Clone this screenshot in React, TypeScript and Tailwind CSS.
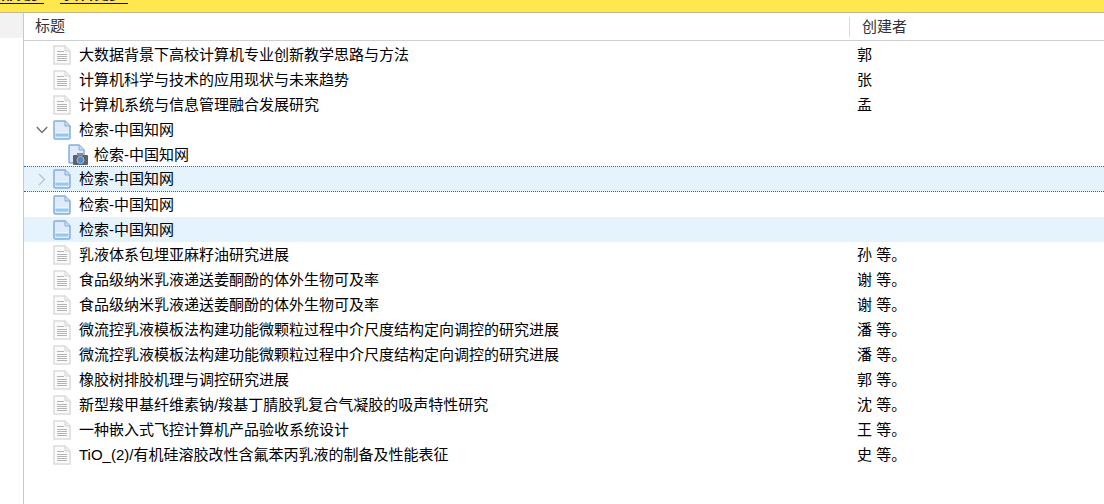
const font = "font-['Liberation_Sans','Noto_Sans_CJK_SC',sans-serif]";

type Row = {
  title: string;
  author?: string;
  icon: "doc" | "blue" | "snap";
  chevron?: "down" | "right";
  child?: boolean;
  selected?: boolean;
  focused?: boolean;
};

const rows: Row[] = [
  { title: "大数据背景下高校计算机专业创新教学思路与方法", author: "郭", icon: "doc" },
  { title: "计算机科学与技术的应用现状与未来趋势", author: "张", icon: "doc" },
  { title: "计算机系统与信息管理融合发展研究", author: "孟", icon: "doc" },
  { title: "检索-中国知网", icon: "blue", chevron: "down" },
  { title: "检索-中国知网", icon: "snap", child: true },
  { title: "检索-中国知网", icon: "blue", chevron: "right", focused: true },
  { title: "检索-中国知网", icon: "blue" },
  { title: "检索-中国知网", icon: "blue", selected: true },
  { title: "乳液体系包埋亚麻籽油研究进展", author: "孙 等。", icon: "doc" },
  { title: "食品级纳米乳液递送姜酮酚的体外生物可及率", author: "谢 等。", icon: "doc" },
  { title: "食品级纳米乳液递送姜酮酚的体外生物可及率", author: "谢 等。", icon: "doc" },
  { title: "微流控乳液模板法构建功能微颗粒过程中介尺度结构定向调控的研究进展", author: "潘 等。", icon: "doc" },
  { title: "微流控乳液模板法构建功能微颗粒过程中介尺度结构定向调控的研究进展", author: "潘 等。", icon: "doc" },
  { title: "橡胶树排胶机理与调控研究进展", author: "郭 等。", icon: "doc" },
  { title: "新型羧甲基纤维素钠/羧基丁腈胶乳复合气凝胶的吸声特性研究", author: "沈 等。", icon: "doc" },
  { title: "一种嵌入式飞控计算机产品验收系统设计", author: "王 等。", icon: "doc" },
  { title: "TiO_(2)/有机硅溶胶改性含氟苯丙乳液的制备及性能表征", author: "史 等。", icon: "doc" },
];

function DocIcon() {
  return (
    <svg width="18" height="20" viewBox="0 0 18 20" className="shrink-0">
      <path d="M1 1H12L17 6V19H1Z" fill="#fbfbfb" stroke="#dcdcdc" strokeWidth="1.6" />
      <path d="M12 1V6H17" fill="#ececec" stroke="#d4d4d4" />
      <path d="M4 6.5H11M4 9.5H14M4 11.5H14M4 13.5H14M4 15.5H14" stroke="#b4b4b4" />
    </svg>
  );
}

function BlueIcon() {
  return (
    <svg width="18" height="20" viewBox="0 0 18 20" className="shrink-0">
      <path d="M2 1H12L17 6V17.5A1.5 1.5 0 0 1 15.5 19H2.5A1.5 1.5 0 0 1 1 17.5V2A1 1 0 0 1 2 1Z" fill="#dfeafa" stroke="#80aedd" strokeWidth="1.5" />
      <path d="M12 1V6H17" fill="#c6dcf3" stroke="#80aedd" />
      <rect x="2.5" y="12.5" width="13" height="1" fill="#ffffff" />
      <rect x="2.5" y="13.5" width="13" height="3" fill="#8fcaf2" />
    </svg>
  );
}

function SnapIcon() {
  return (
    <svg width="20" height="21" viewBox="0 0 20 21" className="shrink-0">
      <path d="M2 1H11L16 6V19H2A1 1 0 0 1 1 18V2A1 1 0 0 1 2 1Z" fill="#dfeafa" stroke="#80aedd" strokeWidth="1.5" />
      <path d="M11 1V6H16" fill="#c6dcf3" stroke="#80aedd" />
      <rect x="5" y="11" width="15" height="10" rx="1" fill="#5f6266" />
      <rect x="9" y="9" width="6" height="3" fill="#85888c" />
      <circle cx="12.5" cy="16" r="3.5" fill="#4a8ed0" stroke="#a9b8c6" />
    </svg>
  );
}

function Chevron({ dir }: { dir: "down" | "right" }) {
  return dir === "down" ? (
    <svg width="12" height="8" viewBox="0 0 12 8">
      <path d="M0.8 1L6 6.5L11.2 1" fill="none" stroke="#6f6f6f" strokeWidth="1.4" />
    </svg>
  ) : (
    <svg width="8" height="13" viewBox="0 0 8 13">
      <path d="M1 1L6.5 6.5L1 12" fill="none" stroke="#c2c2c2" strokeWidth="1.4" />
    </svg>
  );
}

function ListRow({ row }: { row: Row }) {
  const box = row.focused
    ? "h-[26px] -mt-px bg-[#e5f3fd] border-y border-dotted border-[#0078d7]"
    : row.selected
      ? "h-[25px] bg-[#e5f3fd]"
      : "h-[25px]";
  // text sits a pixel low in every row but the focused one
  const nudge = row.focused ? "" : "pt-[2px]";
  return (
    <div className={`flex items-center ${box}`}>
      <div className="flex items-center w-[825px] shrink-0 overflow-hidden">
        <div className="w-[29px] shrink-0 pl-[6px] flex justify-center">
          {row.chevron && <Chevron dir={row.chevron} />}
        </div>
        {row.child && <div className="w-[15px] shrink-0" />}
        {row.icon === "doc" && <DocIcon />}
        {row.icon === "blue" && <BlueIcon />}
        {row.icon === "snap" && <SnapIcon />}
        <span className={`${row.child ? "ml-[6px]" : "ml-[8px]"} ${nudge} text-[15px] text-black whitespace-nowrap`}>
          {row.title}
        </span>
      </div>
      <span className={`ml-[8px] ${nudge} text-[15px] text-black whitespace-nowrap`}>{row.author}</span>
    </div>
  );
}

export default function App() {
  return (
    <div className={`w-[1104px] h-[504px] flex flex-col overflow-hidden bg-white ${font}`}>
      {/* yellow banner, its links are cut off by the crop */}
      <div className="h-[13px] shrink-0 bg-[#ffe74d] border-b border-[#b5b5b5] flex items-end overflow-hidden">
        <a className="ml-[-14px] mb-[8px] w-[58px] text-right text-[15px] leading-[18px] font-bold text-black border-b border-black whitespace-nowrap overflow-hidden">
          全部更多
        </a>
        <a className="ml-[16px] mb-[8px] w-[68px] text-center text-[15px] leading-[18px] font-bold text-black border-b border-black whitespace-nowrap overflow-hidden">
          资料更多
        </a>
      </div>
      <div className="flex flex-1 min-h-0">
        {/* left rail */}
        <div className="w-[24px] shrink-0 border-r border-[#c9c9c9] flex flex-col">
          <div className="h-[25px] bg-[#f2f2f2]" />
        </div>
        <div className="flex-1 min-w-0 flex flex-col">
          <div className="h-[28px] shrink-0 flex items-center border-b border-[#cfcfcf]">
            <span className="w-[825px] pl-[11px] text-[15px] text-[#333]">标题</span>
            <span className="h-[20px] border-l border-[#dcdcdc] pl-[12px] text-[15px] leading-[20px] text-[#333]">创建者</span>
          </div>
          <div className="pt-[1px]">
            {rows.map((row, i) => (
              <ListRow key={i} row={row} />
            ))}
          </div>
        </div>
      </div>
    </div>
  );
}
